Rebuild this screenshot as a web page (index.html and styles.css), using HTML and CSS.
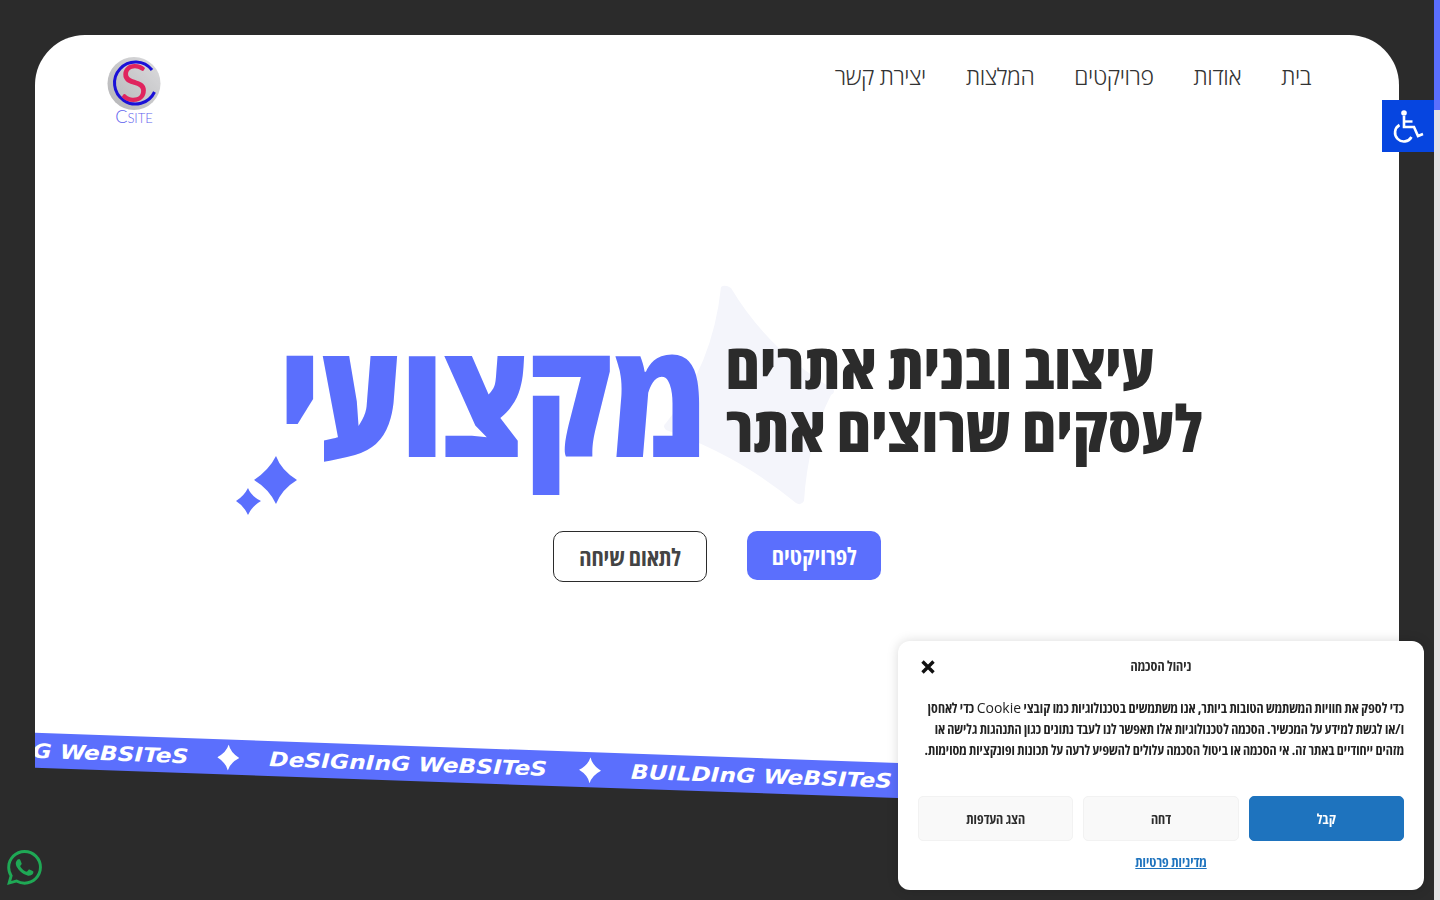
FILE: index.html
```html
<!DOCTYPE html>
<html lang="he" dir="rtl">
<head>
    <meta charset="UTF-8">
    <title>CSite</title>
    <link rel="stylesheet" href="styles.css">
</head>
<body>
    <div class="page">
        <div class="card">
            <header class="site-header">
                <nav class="main-nav">
                    <a href="#">בית</a>
                    <a href="#">אודות</a>
                    <a href="#">פרויקטים</a>
                    <a href="#">המלצות</a>
                    <a href="#">יצירת קשר</a>
                </nav>
                <a class="logo" href="#">
                    <svg class="logo-mark" width="54" height="54" viewBox="0 0 54 54">
                        <defs>
                            <linearGradient id="logoBg" x1="0" y1="1" x2="1" y2="0">
                                <stop offset="0%" stop-color="#b4b4b6"/>
                                <stop offset="100%" stop-color="#dcdcde"/>
                            </linearGradient>
                        </defs>
                        <circle cx="27" cy="26.500" r="26.500" fill="url(#logoBg)"/>
                        <path d="M45 13 A21 21 0 1 0 47.500 35" fill="none" stroke="#1a10d8" stroke-width="3"/>
                        <text class="logo-s" x="27" y="45" text-anchor="middle">S</text>
                    </svg>
                    <span class="logo-name">Csite</span>
                </a>
            </header>

            <section class="hero">
                <svg class="hero-bg-star" width="176" height="222" viewBox="0 0 176 222">
                    <path d="M58 2 Q62 -1 68 3 Q105 65 170 104 Q173 107 168 110 Q145 155 141 216 Q138 221 133 218 Q75 170 3 145 Q-1 141 3 138 Q50 80 58 2 Z" fill="#f4f5fb"/>
                </svg>
                <div class="hero-row">
                    <h1 class="hero-title">עיצוב ובנית אתרים<br>לעסקים שרוצים אתר</h1>
                    <div class="hero-word">
                        מקצועי
                        <svg class="hero-sparks" width="62" height="60" viewBox="0 0 62 60">
                            <path d="M40 0 Q45 14 61 24 Q46 33 40 48 Q33 33 18 24 Q33 14 40 0 Z" fill="#5b6ffd"/>
                            <path d="M12 32 Q15 40 25 45 Q16 50 12 59 Q8 50 0 45 Q8 40 12 32 Z" fill="#5b6ffd"/>
                        </svg>
                    </div>
                </div>
                <div class="hero-actions">
                    <a class="btn btn-primary" href="#">לפרויקטים</a>
                    <a class="btn btn-outline" href="#">לתאום שיחה</a>
                </div>
            </section>
        </div>

        <div class="ticker" dir="ltr">
            <span class="ticker-text">BUILDInG WeBSITeS</span>
            <svg class="ticker-star" width="22" height="26" viewBox="0 0 22 26"><path d="M11 0 Q13 8 22 13 Q13 18 11 26 Q9 18 0 13 Q9 8 11 0 Z" fill="#fff"/></svg>
            <span class="ticker-text long">DeSIGnInG WeBSITeS</span>
            <svg class="ticker-star" width="22" height="26" viewBox="0 0 22 26"><path d="M11 0 Q13 8 22 13 Q13 18 11 26 Q9 18 0 13 Q9 8 11 0 Z" fill="#fff"/></svg>
            <span class="ticker-text">BUILDInG WeBSITeS</span>
            <svg class="ticker-star" width="22" height="26" viewBox="0 0 22 26"><path d="M11 0 Q13 8 22 13 Q13 18 11 26 Q9 18 0 13 Q9 8 11 0 Z" fill="#fff"/></svg>
            <span class="ticker-text long">DeSIGnInG WeBSITeS</span>
        </div>
    </div>

    <!-- Fixed widgets -->
    <div class="scroll-track"><div class="scroll-thumb"></div></div>

    <a class="a11y-btn" href="#" aria-label="נגישות">
        <svg width="32" height="36" viewBox="0 0 32 36">
            <circle cx="12" cy="5" r="2.8" fill="#fff"/>
            <path d="M12 8 V19 H22 L26 28 L31 26" fill="none" stroke="#fff" stroke-width="2.600"/>
            <path d="M12 13.500 H20.500" fill="none" stroke="#fff" stroke-width="2.400"/>
            <path d="M7.500 17 A8.800 8.800 0 1 0 19.500 29" fill="none" stroke="#fff" stroke-width="2.600"/>
        </svg>
    </a>

    <a class="whatsapp" href="#" aria-label="WhatsApp">
        <svg width="35" height="35" viewBox="0 0 24 24">
            <path fill="#1fa855" d="M17.472 14.382c-.297-.149-1.758-.867-2.03-.967-.273-.099-.471-.148-.67.15-.197.297-.767.966-.94 1.164-.173.199-.347.223-.644.075-.297-.15-1.255-.463-2.39-1.475-.883-.788-1.48-1.761-1.653-2.059-.173-.297-.018-.458.13-.606.134-.133.298-.347.446-.52.149-.174.198-.298.298-.497.099-.198.05-.371-.025-.52-.075-.149-.669-1.612-.916-2.207-.242-.579-.487-.5-.669-.51-.173-.008-.371-.01-.57-.01-.198 0-.52.074-.792.372-.272.297-1.04 1.016-1.04 2.479 0 1.462 1.065 2.875 1.213 3.074.149.198 2.096 3.2 5.077 4.487.709.306 1.262.489 1.694.625.712.227 1.36.195 1.871.118.571-.085 1.758-.719 2.006-1.413.248-.694.248-1.289.173-1.413-.074-.124-.272-.198-.57-.347m-5.421 7.403h-.004a9.87 9.87 0 01-5.031-1.378l-.361-.214-3.741.982.998-3.648-.235-.374a9.86 9.86 0 01-1.51-5.26c.001-5.45 4.436-9.884 9.888-9.884 2.64 0 5.122 1.03 6.988 2.898a9.825 9.825 0 012.893 6.994c-.003 5.45-4.437 9.884-9.885 9.884m8.413-18.297A11.815 11.815 0 0012.05 0C5.495 0 .16 5.335.157 11.892c0 2.096.547 4.142 1.588 5.945L.057 24l6.305-1.654a11.882 11.882 0 005.683 1.448h.005c6.554 0 11.89-5.335 11.893-11.893a11.821 11.821 0 00-3.48-8.413z"/>
        </svg>
    </a>

    <div class="consent">
        <div class="consent-head">
            <span class="consent-title">ניהול הסכמה</span>
            <svg class="consent-close" width="16" height="16" viewBox="0 0 16 16">
                <path d="M2.500 2.500 L13.500 13.500 M13.500 2.500 L2.500 13.500" stroke="#111" stroke-width="3.400" fill="none"/>
            </svg>
        </div>
        <p class="consent-text">כדי לספק את חוויות המשתמש הטובות ביותר, אנו משתמשים בטכנולוגיות כמו קובצי <span class="latin">Cookie</span> כדי לאחסן ו/או לגשת למידע על המכשיר. הסכמה לטכנולוגיות אלו תאפשר לנו לעבד נתונים כגון התנהגות גלישה או מזהים ייחודיים באתר זה. אי הסכמה או ביטול הסכמה עלולים להשפיע לרעה על תכונות ופונקציות מסוימות.</p>
        <div class="consent-buttons">
            <button class="consent-btn accept">קבל</button>
            <button class="consent-btn">דחה</button>
            <button class="consent-btn">הצג העדפות</button>
        </div>
        <a class="consent-link" href="#">מדיניות פרטיות</a>
    </div>
</body>
</html>
```
FILE: styles.css
```css
* {
    box-sizing: border-box;
}

html, body {
    height: 100%;
}

body {
    margin: 0;
    background-color: #2b2b2b;
    color: #2b2b2b;
    font-family: "Open Sans", "Liberation Sans", sans-serif;
    font-stretch: 75%;
    overflow: hidden;
}

a {
    text-decoration: none;
    color: inherit;
}

/* Page frame, clips the slanted ticker at the card edges */
.page {
    margin: 35px 41px 0 35px;
    width: 1364px;
    height: 800px;
    overflow: hidden;
    position: relative;
}

.card {
    background-color: #fff;
    border-radius: 50px 50px 0 0;
    height: 730px;
    position: relative;
}

.site-header {
    display: flex;
    justify-content: space-between;
    align-items: flex-start;
    padding: 22px 88px 0 72px;
}

.main-nav {
    display: flex;
    gap: 40px;
    padding-top: 3px;
    font-size: 23px;
    font-weight: 300;
    font-stretch: 100%;
    letter-spacing: -0.4px;
    color: #333;
}

.logo {
    display: flex;
    flex-direction: column;
    align-items: center;
    width: 54px;
}

.logo-mark {
    overflow: visible;
}

.logo-s {
    font-family: "Lato", sans-serif;
    font-size: 52px;
    font-weight: 400;
    fill: #e0245e;
}

.logo-name {
    font-family: "Lato", sans-serif;
    font-size: 18px;
    font-weight: 300;
    font-variant: small-caps;
    color: #5f63ee;
    line-height: 10px;
    white-space: nowrap;
}

/* Hero */
.hero {
    position: relative;
    display: flex;
    flex-direction: column;
    align-items: center;
}

.hero-bg-star {
    position: absolute;
    left: 628px;
    top: 164px;
}

.hero-row {
    position: relative;
    display: flex;
    align-items: flex-start;
    gap: 20px;
    margin-top: 197px;
    padding-left: 48px;
}

.hero-title {
    margin: 15px 0 0;
    font-size: 64px;
    line-height: 63px;
    font-weight: 800;
    letter-spacing: 0.5px;
    text-align: left;
    white-space: nowrap;
    color: #2b2b2b;
}

.hero-word {
    position: relative;
    margin-top: -3px;
    font-size: 160px;
    line-height: 160px;
    font-weight: 800;
    white-space: nowrap;
    color: #5b6ffd;
}

.hero-sparks {
    position: absolute;
    left: -44px;
    top: 141px;
}

.hero-actions {
    display: flex;
    align-items: flex-start;
    gap: 40px;
    margin-top: 56px;
}

.btn {
    display: block;
    font-size: 24px;
    font-weight: 700;
    border-radius: 10px;
}

.btn-primary {
    height: 49px;
    padding: 0 24.5px;
    line-height: 49px;
    background-color: #5b6ffd;
    color: #fff;
}

.btn-outline {
    height: 51px;
    padding: 0 25.5px;
    line-height: 49px;
    border: 1px solid #2b2b2b;
    color: #444;
}

/* Slanted ticker */
.ticker {
    display: flex;
    align-items: center;
    gap: 30px;
    width: 1500px;
    height: 35px;
    margin: -10px -20px 0 0;
    padding-left: 8px;
    background-color: #5b6ffd;
    transform: rotate(2deg);
    position: relative;
    overflow: hidden;
}

.ticker-text {
    flex-shrink: 0;
    width: 260px;
    font-family: "DejaVu Sans", sans-serif;
    font-size: 20px;
    font-weight: 700;
    font-style: italic;
    color: #fff;
    white-space: nowrap;
    transform: scaleX(1.3);
    transform-origin: left center;
}

.ticker-text.long {
    width: 280px;
}

.ticker-star {
    flex-shrink: 0;
}

/* Fixed widgets */
.scroll-track {
    position: fixed;
    top: 0;
    right: 0;
    width: 6px;
    height: 100%;
    background-color: #e4e2e4;
}

.scroll-thumb {
    height: 110px;
    background-color: #5b6ffd;
}

.a11y-btn {
    position: fixed;
    top: 100px;
    right: 6px;
    width: 52px;
    height: 52px;
    display: flex;
    align-items: center;
    justify-content: center;
    background-color: #0645e0;
}

.whatsapp {
    position: fixed;
    left: 7px;
    top: 850px;
    line-height: 0;
}

/* Consent box */
.consent {
    position: fixed;
    right: 16px;
    bottom: 10px;
    width: 526px;
    height: 249px;
    padding: 0 20px;
    background-color: #fff;
    border-radius: 12px;
    box-shadow: 0 0 12px rgba(0, 0, 0, 0.15);
    display: flex;
    flex-direction: column;
}

.consent-head {
    position: relative;
    height: 49px;
    display: flex;
    align-items: center;
    justify-content: center;
}

.consent-title {
    font-size: 14px;
    font-weight: 700;
}

.consent-close {
    position: absolute;
    left: 2px;
    top: 18px;
}

.consent-text {
    margin: 7px 0 0;
    font-size: 13.8px;
    font-weight: 700;
    line-height: 21px;
    color: #222;
    height: 63px;
}

.latin {
    font-size: 14px;
    font-weight: 400;
    font-stretch: 100%;
}

.consent-buttons {
    display: grid;
    grid-template-columns: repeat(3, 1fr);
    gap: 10px;
    margin-top: 36px;
}

.consent-btn {
    height: 45px;
    font-family: inherit;
    font-stretch: inherit;
    font-size: 14px;
    font-weight: 700;
    color: #2b2b2b;
    background-color: #f9f9f9;
    border: 1px solid #f2f2f2;
    border-radius: 5px;
}

.consent-btn.accept {
    background-color: #1e73be;
    border-color: #1e73be;
    color: #fff;
}

.consent-link {
    margin-top: 11px;
    padding-left: 20px;
    text-align: center;
    font-size: 14px;
    font-weight: 700;
    color: #1e73be;
    text-decoration: underline;
}
```
